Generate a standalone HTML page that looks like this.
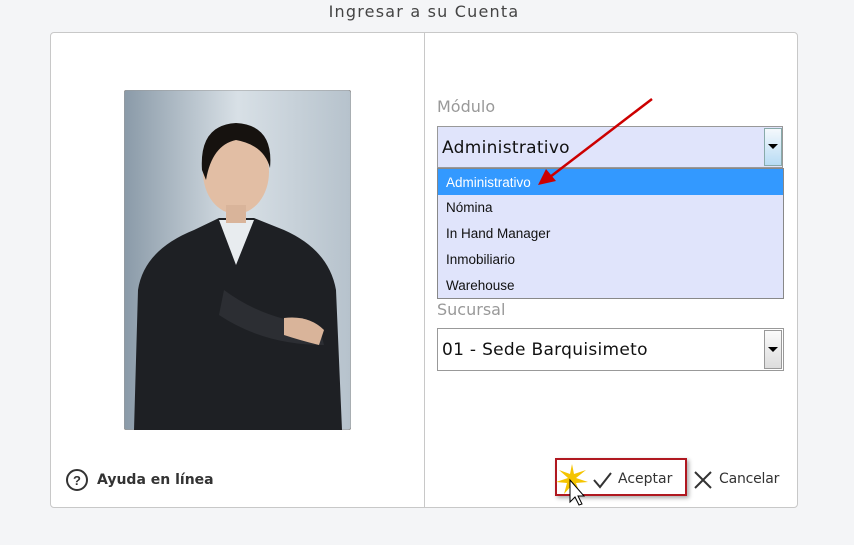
<!DOCTYPE html><html><head><style>
body{margin:0;width:854px;height:545px;background:#f4f5f7;font-family:"DejaVu Sans","Liberation Sans",sans-serif;position:relative;overflow:hidden}
.a{position:absolute}
</style></head><body>
<div class="a" style="left:0;width:848px;top:2px;text-align:center;font-size:16px;color:#444;letter-spacing:1.2px">Ingresar a su Cuenta</div>
<div class="a" style="left:50px;top:32px;width:746px;height:474px;background:#fff;border:1px solid #c8c8c8;border-radius:4px"></div>
<div class="a" style="left:424px;top:33px;width:1px;height:474px;background:#c8c8c8"></div>
<svg class="a" style="left:124px;top:90px" width="227" height="340" viewBox="0 0 227 340">
<defs><linearGradient id="bg" x1="0" x2="1"><stop offset="0" stop-color="#8a9aa8"/><stop offset=".5" stop-color="#d8e0e6"/><stop offset="1" stop-color="#b6c2cc"/></linearGradient></defs>
<rect width="227" height="340" rx="3" fill="url(#bg)" stroke="#999"/>
<path d="M10 340 L14 200 Q20 160 70 140 L95 128 L130 128 L160 140 Q205 160 212 200 L218 340Z" fill="#1e2024"/>
<path d="M95 130 L112 175 L130 130 Z" fill="#e8ecef"/>
<path d="M100 200 Q140 230 195 235 L200 255 Q140 255 95 225Z" fill="#2c2e33"/>
<path d="M160 228 Q185 225 200 240 L195 255 Q175 250 160 245Z" fill="#d9b49a"/>
<ellipse cx="112" cy="82" rx="33" ry="42" fill="#e2bea4"/>
<path d="M78 80 Q75 35 112 33 Q150 35 146 78 Q140 55 112 50 Q88 55 82 90Z" fill="#16120f"/>
<rect x="102" y="115" width="20" height="18" fill="#d9b49a"/>
</svg>
<svg class="a" style="left:65px;top:468px" width="24" height="24"><circle cx="12" cy="12" r="10" fill="none" stroke="#333" stroke-width="2"/><text x="12" y="17" text-anchor="middle" font-size="13" font-weight="bold" fill="#333" font-family="Liberation Sans">?</text></svg>
<div class="a" style="left:97px;top:472px;font-size:14px;font-weight:bold;color:#333">Ayuda en línea</div>
<div class="a" style="left:437px;top:97px;font-size:16px;color:#999">Módulo</div>
<div class="a" style="left:437px;top:126px;width:346px;height:42px;background:#e0e4fb;border:1px solid #999;box-sizing:border-box"></div>
<div class="a" style="left:442px;top:138px;font-size:17px;color:#111;letter-spacing:.3px">Administrativo</div>
<div class="a" style="left:764px;top:128px;width:18px;height:38px;background:linear-gradient(#f4f8fc,#b8dcf4);border:1px solid #8aa;box-sizing:border-box"></div>
<div class="a" style="left:768px;top:144px;border:5px solid transparent;border-top:5px solid #000;border-bottom:0"></div>
<div class="a" style="left:437px;top:168px;width:347px;height:131px;background:#e0e4fb;border:1px solid #888;box-sizing:border-box;font-family:'Liberation Sans',sans-serif;font-size:13.5px;color:#111">
<div style="background:#3399ff;color:#fff;height:26px;line-height:28px;padding-left:8px">Administrativo</div>
<div style="height:26px;line-height:26px;padding-left:8px">Nómina</div>
<div style="height:26px;line-height:26px;padding-left:8px">In Hand Manager</div>
<div style="height:26px;line-height:26px;padding-left:8px">Inmobiliario</div>
<div style="height:26px;line-height:26px;padding-left:8px">Warehouse</div></div>
<svg class="a" style="left:530px;top:95px" width="130" height="95"><line x1="122" y1="4" x2="20" y2="82" stroke="#c00" stroke-width="2.5"/><path d="M8 90 L16 74 L26 86Z" fill="#c00"/></svg>
<div class="a" style="left:437px;top:300px;font-size:16px;color:#999">Sucursal</div>
<div class="a" style="left:437px;top:328px;width:347px;height:43px;background:#fff;border:1px solid #999;box-sizing:border-box"></div>
<div class="a" style="left:442px;top:340px;font-size:17px;color:#111;letter-spacing:.3px">01 - Sede Barquisimeto</div>
<div class="a" style="left:764px;top:330px;width:18px;height:39px;background:linear-gradient(#fafafa,#ddd);border:1px solid #999;box-sizing:border-box"></div>
<div class="a" style="left:768px;top:347px;border:5px solid transparent;border-top:5px solid #000;border-bottom:0"></div>
<div class="a" style="left:555px;top:458px;width:132px;height:38px;border:2px solid #b01820;box-sizing:border-box;box-shadow:2px 2px 4px #aaa"></div>
<svg class="a" style="left:556px;top:462px" width="60" height="45"><path d="M16 2 L18 12 L30 8 L20 16 L32 20 L20 21 L24 32 L16 23 L8 32 L11 21 L0 20 L12 16 L3 8 L14 12Z" fill="#f5c400"/><path d="M14 18 L14 40 L19 35 L23 43 L26 42 L22 34 L28 34Z" fill="#fff" stroke="#000"/><path d="M38 18 L44 25 L55 11" fill="none" stroke="#333" stroke-width="2"/></svg>
<div class="a" style="left:618px;top:471px;font-size:14px;color:#333">Aceptar</div>
<svg class="a" style="left:693px;top:470px" width="20" height="20"><path d="M2 2 L18 18 M18 2 L2 18" stroke="#333" stroke-width="2"/></svg>
<div class="a" style="left:719px;top:471px;font-size:14px;color:#333;letter-spacing:-.2px">Cancelar</div>
</body></html>
